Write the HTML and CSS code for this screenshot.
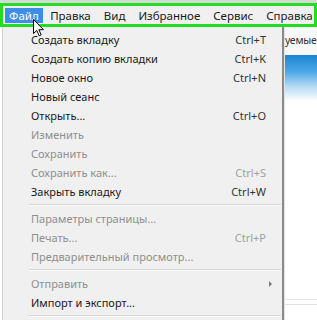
FILE: index.html
```html
<!DOCTYPE html>
<html lang="ru">
<head>
<meta charset="utf-8">
<link rel="stylesheet" href="styles.css">
</head>
<body>
<div class="screen">
  <div class="topstrip"></div>
  <div class="menubar">
    <span class="mitem active">Файл</span>
    <span class="mitem">Правка</span>
    <span class="mitem">Вид</span>
    <span class="mitem">Избранное</span>
    <span class="mitem">Сервис</span>
    <span class="mitem">Справка</span>
  </div>
  <div class="main">
    <div class="dropdown">
      <div class="row"><span>Создать вкладку</span><span class="sc">Ctrl+T</span></div>
      <div class="row"><span>Создать копию вкладки</span><span class="sc">Ctrl+K</span></div>
      <div class="row"><span>Новое окно</span><span class="sc">Ctrl+N</span></div>
      <div class="row"><span>Новый сеанс</span></div>
      <div class="row"><span>Открыть...</span><span class="sc">Ctrl+O</span></div>
      <div class="row dis"><span>Изменить</span></div>
      <div class="row dis"><span>Сохранить</span></div>
      <div class="row dis"><span>Сохранить как...</span><span class="sc">Ctrl+S</span></div>
      <div class="row"><span>Закрыть вкладку</span><span class="sc">Ctrl+W</span></div>
      <div class="sep"></div>
      <div class="row dis"><span>Параметры страницы...</span></div>
      <div class="row dis"><span>Печать...</span><span class="sc">Ctrl+P</span></div>
      <div class="row dis"><span>Предварительный просмотр...</span></div>
      <div class="sep"></div>
      <div class="row dis"><span>Отправить</span><span class="arrow"></span></div>
      <div class="row"><span>Импорт и экспорт...</span></div>
      <div class="sep"></div>
    </div>
    <div class="page">
      <div class="pagetext">уемые</div>
      <div class="banner"></div>
      <div class="blank"></div>
      <div class="pline"></div>
      <div class="pline"></div>
    </div>
  </div>
  <svg class="cursor" width="12" height="18" viewBox="0 0 12 18">
    <path d="M0.5 0.5 L0.5 14.5 L3.8 11.4 L6.2 16.8 L8.2 15.9 L5.9 10.7 L10.5 10.7 Z" fill="#fff" stroke="#000" stroke-width="1"/>
  </svg>
</div>
</body>
</html>
```

FILE: styles.css
```css
html, body {
  margin: 0;
  padding: 0;
  background: #ffffff;
}
.screen {
  position: relative;
  width: 317px;
  height: 320px;
  overflow: hidden;
  font-family: "Noto Sans", "Open Sans", sans-serif;
  font-size: 11px;
  color: #1a1a1a;
}
.topstrip {
  height: 3px;
  background: #d4dad4;
}
.menubar {
  display: flex;
  align-items: center;
  height: 18px;
  padding: 0 0 0 2px;
  border: 3px solid #22dd22;
  background: #f0f0f0;
  white-space: nowrap;
  font-size: 11.5px;
}
.mitem {
  padding: 0 6.5px;
  height: 15px;
  line-height: 15px;
  color: #1a1a1a;
}
.mitem.active {
  background: #3d8ee6;
  color: #ffffff;
  padding: 0 4px;
  margin-right: 1px;
}
.main {
  display: flex;
  height: 296px;
}
.dropdown {
  width: 282px;
  flex: none;
  margin-left: 2px;
  background: #f0f0f0;
  border-left: 1px solid #cfcfcf;
  border-right: 2px solid #8a8a8a;
  padding-top: 3px;
  box-sizing: border-box;
}
.row {
  display: flex;
  align-items: center;
  justify-content: space-between;
  height: 19px;
  padding: 0 16px 0 28px;
  white-space: nowrap;
}
.row.dis {
  color: #8f8f8f;
}
.sc {
  color: #333333;
}
.row.dis .sc {
  color: #a0a0a0;
}
.arrow {
  width: 0;
  height: 0;
  border-top: 3px solid transparent;
  border-bottom: 3px solid transparent;
  border-left: 3px solid #7a7a7a;
  margin-right: -6px;
}
.sep {
  height: 8px;
  margin: 0 1px 0 26px;
  display: flex;
  flex-direction: column;
  justify-content: center;
}
.sep::before {
  content: "";
  display: block;
  height: 1px;
  background: #d7d7d7;
}
.sep::after {
  content: "";
  display: block;
  height: 1px;
  background: #fbfbfb;
}
.page {
  flex: 1;
  display: flex;
  flex-direction: column;
  background: #ffffff;
  border-left: 1px solid #e4e4e4;
}
.pagetext {
  height: 26px;
  padding-top: 2px;
  line-height: 22px;
  font-size: 10.5px;
  letter-spacing: -0.2px;
  color: #333;
  white-space: nowrap;
  background: #f7f9fb;
}
.banner {
  height: 46px;
  background: linear-gradient(to bottom, #1a84d2 0%, #4aa6e6 35%, #b8dcf5 70%, #ffffff 100%);
}
.blank {
  height: 198px;
}
.pline {
  height: 4px;
  border-top: 1px solid #e2e2e2;
}
.cursor {
  position: absolute;
  left: 33px;
  top: 19px;
}
```
